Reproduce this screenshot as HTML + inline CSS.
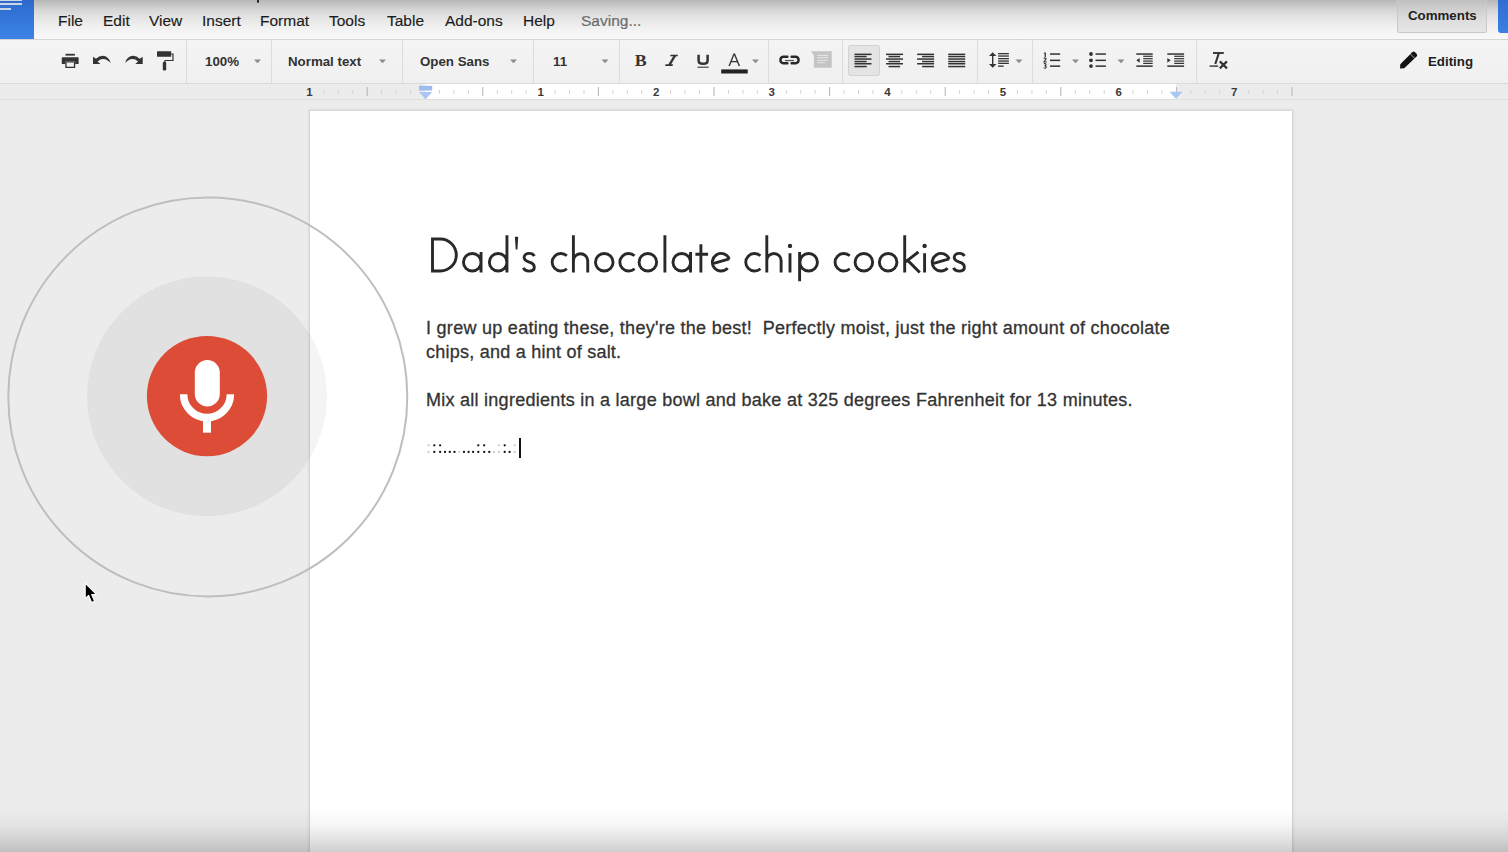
<!DOCTYPE html>
<html><head><meta charset="utf-8">
<style>
html,body{margin:0;padding:0;}
body{width:1508px;height:852px;overflow:hidden;position:relative;background:#ececec;font-family:"Liberation Sans",sans-serif;}
.abs{position:absolute;}
#hdr{left:0;top:0;width:1508px;height:39px;background:linear-gradient(#b6b6b6 0px,#c6c6c6 5px,#d6d6d6 10px,#e8e8e8 20px,#f3f3f3 30px,#f8f8f8 37px);}
#hdrline{left:0;top:39px;width:1508px;height:1px;background:#d5d5d5;}
#tb{left:0;top:40px;width:1508px;height:43px;background:linear-gradient(#f4f4f4,#f0f0f0);}
#tbline{left:0;top:83px;width:1508px;height:1px;background:#d9d9d9;}
#ruler{left:0;top:84px;width:1508px;height:15px;background:#ececec;}
#rulerline{left:0;top:99px;width:1508px;height:1px;background:#dedede;}
#rwhite{left:425px;top:84px;width:751px;height:15px;background:#fff;}
.menu{top:12px;font-size:15.5px;color:#1c1c1c;line-height:18px;white-space:nowrap;-webkit-text-stroke:0.15px #1c1c1c;}
.tbt{font-size:13.3px;font-weight:bold;color:#333;line-height:15px;white-space:nowrap;top:53.5px;}
.sep{top:40px;width:1px;height:43px;background:#dcdcdc;}
.dd{width:0;height:0;border-left:3.5px solid transparent;border-right:3.5px solid transparent;border-top:4px solid #888;top:59px;}
#page{left:310px;top:111px;width:982px;height:760px;background:#fff;box-shadow:0 0 0 1px #d6d6d6,0 0 2px 2px rgba(0,0,0,0.06);}
.doc{font-size:18px;color:#333;white-space:nowrap;line-height:20px;-webkit-text-stroke:0.3px #333;}
#vig{left:0;top:808px;width:1508px;height:44px;background:linear-gradient(rgba(0,0,0,0) 0px,rgba(0,0,0,0.04) 18px,rgba(0,0,0,0.11) 31px,rgba(0,0,0,0.19) 44px);}
</style></head>
<body>
<div id="hdr" class="abs"></div>
<div id="hdrline" class="abs"></div>
<div class="abs" style="left:256.6px;top:-1px;width:2.6px;height:3.6px;border-radius:0 0 1.3px 1.3px;background:#2b2834;"></div>
<!-- docs icon -->
<div class="abs" style="left:0;top:0;width:34px;height:39px;background:linear-gradient(#2d69cc,#3c84e6);"></div>
<div class="abs" style="left:0;top:0;width:22px;height:1px;background:#cbd6e4;"></div>
<div class="abs" style="left:0;top:3px;width:22px;height:2px;background:#cbd6e4;"></div>
<div class="abs" style="left:0;top:8px;width:11px;height:2px;background:#cbd6e4;"></div>

<div class="abs menu" style="left:58px;">File</div>
<div class="abs menu" style="left:103px;">Edit</div>
<div class="abs menu" style="left:149px;">View</div>
<div class="abs menu" style="left:202px;">Insert</div>
<div class="abs menu" style="left:260px;">Format</div>
<div class="abs menu" style="left:329px;">Tools</div>
<div class="abs menu" style="left:387px;">Table</div>
<div class="abs menu" style="left:445px;">Add-ons</div>
<div class="abs menu" style="left:523px;">Help</div>
<div class="abs menu" style="left:581px;color:#777;">Saving...</div>

<!-- comments button -->
<div class="abs" style="left:1397px;top:-3px;width:88px;height:34px;border:1px solid #c9c9c9;border-radius:2px;background:linear-gradient(#bdbdbd,#dcdcdc 20px,#e6e6e6);"></div>
<div class="abs tbt" style="left:1408px;top:8px;color:#222;">Comments</div>
<div class="abs" style="left:1498px;top:-4px;width:14px;height:37px;border-radius:3px;background:linear-gradient(#2f6bd0,#3b80e4);"></div>

<div id="tb" class="abs"></div>
<div id="tbline" class="abs"></div>
<div id="ruler" class="abs"></div>
<div id="rwhite" class="abs"></div>
<div id="rulerline" class="abs"></div>
<!-- ruler -->
<svg class="abs" style="left:0;top:84px;" width="1508" height="16" viewBox="0 84 1508 16">
<g fill="#cfcfcf"><rect x="323.4" y="90" width="1" height="3.5"/><rect x="337.8" y="90" width="1" height="3.5"/><rect x="352.2" y="90" width="1" height="3.5"/><rect x="381.1" y="90" width="1" height="3.5"/><rect x="395.6" y="90" width="1" height="3.5"/><rect x="410.1" y="90" width="1" height="3.5"/><rect x="438.9" y="90" width="1" height="3.5"/><rect x="453.4" y="90" width="1" height="3.5"/><rect x="467.9" y="90" width="1" height="3.5"/><rect x="496.8" y="90" width="1" height="3.5"/><rect x="511.2" y="90" width="1" height="3.5"/><rect x="525.6" y="90" width="1" height="3.5"/><rect x="554.5" y="90" width="1" height="3.5"/><rect x="569.0" y="90" width="1" height="3.5"/><rect x="583.5" y="90" width="1" height="3.5"/><rect x="612.4" y="90" width="1" height="3.5"/><rect x="626.8" y="90" width="1" height="3.5"/><rect x="641.2" y="90" width="1" height="3.5"/><rect x="670.1" y="90" width="1" height="3.5"/><rect x="684.6" y="90" width="1" height="3.5"/><rect x="699.0" y="90" width="1" height="3.5"/><rect x="728.0" y="90" width="1" height="3.5"/><rect x="742.4" y="90" width="1" height="3.5"/><rect x="756.8" y="90" width="1" height="3.5"/><rect x="785.8" y="90" width="1" height="3.5"/><rect x="800.2" y="90" width="1" height="3.5"/><rect x="814.6" y="90" width="1" height="3.5"/><rect x="843.5" y="90" width="1" height="3.5"/><rect x="858.0" y="90" width="1" height="3.5"/><rect x="872.5" y="90" width="1" height="3.5"/><rect x="901.3" y="90" width="1" height="3.5"/><rect x="915.8" y="90" width="1" height="3.5"/><rect x="930.2" y="90" width="1" height="3.5"/><rect x="959.1" y="90" width="1" height="3.5"/><rect x="973.6" y="90" width="1" height="3.5"/><rect x="988.0" y="90" width="1" height="3.5"/><rect x="1016.9" y="90" width="1" height="3.5"/><rect x="1031.4" y="90" width="1" height="3.5"/><rect x="1045.8" y="90" width="1" height="3.5"/><rect x="1074.8" y="90" width="1" height="3.5"/><rect x="1089.2" y="90" width="1" height="3.5"/><rect x="1103.7" y="90" width="1" height="3.5"/><rect x="1132.5" y="90" width="1" height="3.5"/><rect x="1147.0" y="90" width="1" height="3.5"/><rect x="1161.4" y="90" width="1" height="3.5"/><rect x="1190.3" y="90" width="1" height="3.5"/><rect x="1204.8" y="90" width="1" height="3.5"/><rect x="1219.2" y="90" width="1" height="3.5"/><rect x="1248.2" y="90" width="1" height="3.5"/><rect x="1262.6" y="90" width="1" height="3.5"/><rect x="1277.0" y="90" width="1" height="3.5"/></g>
<g fill="#b4b4b4"><rect x="366.7" y="87" width="1" height="9"/><rect x="482.3" y="87" width="1" height="9"/><rect x="597.9" y="87" width="1" height="9"/><rect x="713.5" y="87" width="1" height="9"/><rect x="829.1" y="87" width="1" height="9"/><rect x="944.7" y="87" width="1" height="9"/><rect x="1060.3" y="87" width="1" height="9"/><rect x="1175.9" y="87" width="1" height="9"/><rect x="1291.5" y="87" width="1" height="9"/></g>
<g fill="#3a3a3a" font-family="Liberation Sans" font-weight="bold" font-size="11.5"><text x="309.4" y="95.8" text-anchor="middle">1</text><text x="540.6" y="95.8" text-anchor="middle">1</text><text x="656.2" y="95.8" text-anchor="middle">2</text><text x="771.8" y="95.8" text-anchor="middle">3</text><text x="887.4" y="95.8" text-anchor="middle">4</text><text x="1003.0" y="95.8" text-anchor="middle">5</text><text x="1118.6" y="95.8" text-anchor="middle">6</text><text x="1234.2" y="95.8" text-anchor="middle">7</text></g>
<path d="M419 85.8 H432.2 V90.6 H419 Z" fill="#9dbcf0"/><path d="M419 92 H432.2 L425.6 99.3 Z" fill="#a9c5f4"/>
<path d="M1169.5 91.8 H1182.6 L1176 98.8 Z" fill="#a9c5f4"/>
</svg>

<!-- toolbar icons -->
<svg class="abs" style="left:0;top:40px;" width="1508" height="44" viewBox="0 40 1508 44">
<g fill="#dcdcdc">
<rect x="186" y="40" width="1" height="43"/><rect x="271" y="40" width="1" height="43"/><rect x="402" y="40" width="1" height="43"/><rect x="533" y="40" width="1" height="43"/><rect x="619" y="40" width="1" height="43"/><rect x="768" y="40" width="1" height="43"/><rect x="842" y="40" width="1" height="43"/><rect x="977" y="40" width="1" height="43"/><rect x="1032" y="40" width="1" height="43"/><rect x="1196" y="40" width="1" height="43"/>
</g>
<!-- print -->
<g fill="#333">
<rect x="65.5" y="53.8" width="9.4" height="1.8"/>
<path d="M62.3 57.3 H78.2 Q78.6 57.3 78.6 57.8 V64.1 H75.2 V61.6 H65.3 V64.1 H61.8 V57.8 Q61.8 57.3 62.3 57.3 Z"/>
<path d="M65.3 61.6 H75.2 V68 H65.3 Z M66.6 62.6 V66.8 H73.9 V62.6 Z" fill-rule="evenodd"/>
</g>
<!-- undo / redo -->
<g fill="#333">
<path d="M93 56.7 V64.1 H100.4 L97.6 61.4 Q102.6 57.2 107.6 60.5 Q109.6 61.8 110.7 63 Q108.6 56 102.6 55.8 Q99 55.8 96 58.8 Z"/>
<path d="M142.7 56.7 V64.1 H135.3 L138.1 61.4 Q133.1 57.2 128.1 60.5 Q126.1 61.8 125 63 Q127.1 56 133.1 55.8 Q136.7 55.8 139.7 58.8 Z"/>
</g>
<!-- paint roller -->
<g fill="#333">
<rect x="157" y="51.2" width="14.2" height="5.6" rx="0.6"/>
<path d="M171.2 53.6 H173.6 V60.9 H165.4 V62 H164.4 V59.9 H172.4 V54.6 H171.2 Z"/>
<rect x="162.8" y="61.8" width="3.4" height="8.6" rx="1.2"/>
</g>
<!-- dropdown arrows -->
<g fill="#8c8c8c">
<path d="M254 59.6 H261 L257.5 63.2 Z"/><path d="M379 59.6 H386 L382.5 63.2 Z"/><path d="M510 59.6 H517 L513.5 63.2 Z"/><path d="M601.5 59.6 H608.5 L605 63.2 Z"/><path d="M752 59.6 H759 L755.5 63.2 Z"/><path d="M1015.5 59.6 H1022.5 L1019 63.2 Z"/><path d="M1072 59.6 H1079 L1075.5 63.2 Z"/><path d="M1117.5 59.6 H1124.5 L1121 63.2 Z"/>
</g>
<!-- B I U A -->
<text x="634.8" y="65.9" font-family="Liberation Serif" font-weight="bold" font-size="17" fill="#333" transform="translate(634.8 65.9) scale(1.05 1) translate(-634.8 -65.9)">B</text>
<path d="M670.6 54.7 H678 L677.5 56.3 H670.1 Z M665.6 64.3 H673 L672.5 65.9 H665.1 Z" fill="#333"/><path d="M675.1 55.4 L669.3 65.2" stroke="#333" stroke-width="2.3"/>
<path d="M698.6 54.7 V60.4 Q698.6 63.8 703.1 63.8 Q707.6 63.8 707.6 60.4 V54.7" fill="none" stroke="#333" stroke-width="2.5"/>
<rect x="697.5" y="66.6" width="11.2" height="1.3" fill="#555"/>
<path d="M728.4 65.9 L733.5 53.4 H735 L740.1 65.9 H738.6 L737.1 62.2 H731.4 L729.9 65.9 Z M731.9 60.9 H736.6 L734.25 55.2 Z" fill="#333" fill-rule="evenodd"/>
<rect x="721.2" y="69.4" width="26.5" height="4.1" fill="#222"/>
<!-- link -->
<g fill="none" stroke="#2a2a2a" stroke-width="2.4" stroke-linecap="round">
<path d="M787.4 56.8 H783.1 A3.25 3.25 0 0 0 783.1 63.2 H787.4"/>
<path d="M791.6 56.8 H795.9 A3.25 3.25 0 0 1 795.9 63.2 H791.6"/>
</g>
<rect x="785" y="59.9" width="9" height="1.3" fill="#555"/>
<!-- comment (disabled) -->
<path d="M811 51.2 H831.7 V67.7 H813.9 V55.4 Z" fill="#c4c4c4"/>
<g fill="#e4e4e4"><rect x="817.3" y="54.9" width="10.8" height="1.1"/><rect x="817.3" y="57" width="10.8" height="1.1"/><rect x="817.3" y="59.8" width="10.8" height="1.1"/><rect x="817.3" y="62.1" width="7.7" height="1.1"/></g>
<!-- align left pressed button -->
<rect x="848.5" y="45.5" width="31" height="30" rx="2" fill="#e4e4e4" stroke="#d2d2d2"/>
<g fill="#333">
<rect x="854.5" y="53.6" width="17" height="1.5"/><rect x="854.5" y="55.8" width="12.2" height="1.5"/><rect x="854.5" y="58.3" width="17" height="1.5"/><rect x="854.5" y="60.8" width="12.2" height="1.5"/><rect x="854.5" y="63" width="17" height="1.5"/><rect x="854.5" y="65.8" width="12.2" height="1.5"/>
<rect x="886" y="53.6" width="17" height="1.5"/><rect x="888.5" y="55.8" width="11.6" height="1.5"/><rect x="886" y="58.3" width="17" height="1.5"/><rect x="888.5" y="60.8" width="11.6" height="1.5"/><rect x="886" y="63" width="17" height="1.5"/><rect x="888.5" y="65.8" width="11.6" height="1.5"/>
<rect x="917.1" y="53.6" width="17" height="1.5"/><rect x="922.1" y="55.8" width="12" height="1.5"/><rect x="917.1" y="58.3" width="17" height="1.5"/><rect x="922.1" y="60.8" width="12" height="1.5"/><rect x="917.1" y="63" width="17" height="1.5"/><rect x="922.1" y="65.8" width="12" height="1.5"/>
<rect x="948.2" y="53.6" width="17" height="1.5"/><rect x="948.2" y="55.8" width="17" height="1.5"/><rect x="948.2" y="58.3" width="17" height="1.5"/><rect x="948.2" y="60.8" width="17" height="1.5"/><rect x="948.2" y="63" width="17" height="1.5"/><rect x="948.2" y="65.8" width="17" height="1.5"/>
</g>
<!-- line spacing -->
<g fill="#333">
<rect x="992" y="54" width="1.4" height="12"/>
<path d="M989 56 L992.7 52.3 L996.4 56 Z M989 64.1 L992.7 67.8 L996.4 64.1 Z"/>
<rect x="998.1" y="53" width="10.8" height="1.3"/><rect x="998.1" y="55.4" width="10.8" height="1.3"/><rect x="998.1" y="58" width="10.8" height="1.3"/><rect x="998.1" y="60.4" width="10.8" height="1.3"/><rect x="998.1" y="62.7" width="10.8" height="1.3"/><rect x="998.1" y="65.5" width="5.6" height="1.3"/>
</g>
<!-- numbered list -->
<g fill="#333">
<path d="M1044.2 52.4 H1045.9 V57.2 H1044.6 V53.6 H1043.5 Z"/>
<path d="M1043.4 58.6 Q1043.6 57.6 1045 57.6 Q1046.8 57.7 1046.6 59.1 Q1046.4 60 1044.9 61.4 H1046.8 V62.4 H1043.4 V61.5 Q1045.3 59.8 1045.3 59.1 Q1045.2 58.5 1044.8 58.6 Q1044.5 58.7 1044.5 59 Z"/>
<path d="M1043.4 63.9 Q1043.8 63 1045 63 Q1046.7 63.1 1046.6 64.5 Q1046.6 65.3 1045.9 65.7 Q1046.8 66.1 1046.8 67 Q1046.7 68.6 1045 68.7 Q1043.6 68.7 1043.3 67.6 L1044.3 67.3 Q1044.5 67.8 1045 67.8 Q1045.6 67.7 1045.6 67 Q1045.5 66.2 1044.5 66.2 V65.3 Q1045.4 65.3 1045.4 64.6 Q1045.4 64 1044.9 64 Q1044.5 64 1044.4 64.3 Z"/>
<rect x="1050" y="53.3" width="10.2" height="1.5"/><rect x="1050" y="59.6" width="10.2" height="1.5"/><rect x="1050" y="65.4" width="10.2" height="1.5"/>
</g>
<!-- bullet list -->
<g fill="#333">
<circle cx="1091" cy="54" r="1.9"/><circle cx="1091" cy="60.3" r="1.9"/><circle cx="1091" cy="66.1" r="1.9"/>
<rect x="1095.5" y="53.3" width="10.4" height="1.5"/><rect x="1095.5" y="59.6" width="10.4" height="1.5"/><rect x="1095.5" y="65.4" width="10.4" height="1.5"/>
</g>
<!-- indents -->
<g fill="#333">
<rect x="1136.3" y="53.3" width="16.4" height="1.5"/><rect x="1143.2" y="55.7" width="9.5" height="1.2"/><rect x="1143.2" y="58.1" width="9.5" height="1.2"/><rect x="1143.2" y="60.5" width="9.5" height="1.2"/><rect x="1143.2" y="62.8" width="9.5" height="1.2"/><rect x="1136.3" y="65.4" width="16.4" height="1.5"/>
<path d="M1139.7 57.9 V62.7 L1136.3 60.3 Z"/>
<rect x="1167.3" y="53.3" width="16.8" height="1.5"/><rect x="1174.2" y="55.7" width="9.9" height="1.2"/><rect x="1174.2" y="58.1" width="9.9" height="1.2"/><rect x="1174.2" y="60.5" width="9.9" height="1.2"/><rect x="1174.2" y="62.8" width="9.9" height="1.2"/><rect x="1167.3" y="65.4" width="16.8" height="1.5"/>
<path d="M1167.3 57.9 V62.7 L1170.7 60.3 Z"/>
</g>
<!-- clear formatting -->
<g fill="none" stroke="#333">
<path d="M1213 53 H1223.8" stroke-width="1.9"/>
<path d="M1218.8 53.2 L1215.3 64" stroke-width="2.1"/>
<path d="M1209.6 66.1 H1218.2" stroke-width="1.4"/>
<path d="M1219.8 61.4 L1227 68.4 M1227 61.4 L1219.8 68.4" stroke-width="2.2"/>
</g>
<!-- pencil -->
<path d="M1412.2 52.2 Q1413.6 50.9 1415 52.2 L1416.6 53.8 Q1417.9 55.2 1416.6 56.6 L1404.2 68.3 L1400 68.5 L1400.3 64.3 Z" fill="#111"/>
<path d="M1410.4 54 L1414.8 58.4" stroke="#f2f2f2" stroke-width="0.7"/>
</svg>
<div class="abs tbt" style="left:205px;">100%</div>
<div class="abs tbt" style="left:288px;">Normal text</div>
<div class="abs tbt" style="left:420px;">Open Sans</div>
<div class="abs tbt" style="left:553px;">11</div>
<div class="abs tbt" style="left:1428px;color:#222;">Editing</div>

<div id="page" class="abs"></div>
<!-- document content -->
<svg class="abs" id="title" style="left:420px;top:225px;" width="560" height="64" viewBox="420 225 560 64">
<path d="M432.50 238.95H440.3A16.05 16.05 0 0 1 440.3 271.05H432.5ZM463.45 262.25a8.80 8.80 0 1 0 17.60 0a8.80 8.80 0 1 0 -17.60 0M481.05 252.00L481.05 272.50M489.35 262.25a8.80 8.80 0 1 0 17.60 0a8.80 8.80 0 1 0 -17.60 0M506.95 235.20L506.95 272.50M 534.40 256.00 C 533.40 254.20 531.40 253.40 529.20 253.40 C 526.20 253.40 524.10 255.10 524.10 257.60 C 524.10 260.40 526.80 261.30 529.40 262.20 C 532.20 263.10 534.30 264.40 534.30 267.20 C 534.30 269.70 532.10 271.10 529.00 271.10 C 526.30 271.10 524.20 269.80 523.40 267.90M566.84 255.71A8.80 8.80 0 1 0 566.84 268.79M573.40 235.20L573.40 272.50M573.40 261.62V260.62A7.18 7.18 0 0 1 587.75 260.62V272.50M595.45 262.25a8.80 8.80 0 1 0 17.60 0a8.80 8.80 0 1 0 -17.60 0M634.54 255.71A8.80 8.80 0 1 0 634.54 268.79M639.05 262.25a8.80 8.80 0 1 0 17.60 0a8.80 8.80 0 1 0 -17.60 0M664.90 235.20L664.90 272.50M672.95 262.25a8.80 8.80 0 1 0 17.60 0a8.80 8.80 0 1 0 -17.60 0M690.55 252.00L690.55 272.50M700.90 244.30L700.90 272.50M695.40 254.25H708.10M729.31 258.95A8.80 8.80 0 1 0 727.69 268.14M712.85 263.55L729.31 258.95M760.44 255.71A8.80 8.80 0 1 0 760.44 268.79M766.80 235.20L766.80 272.50M766.80 261.60V260.60A7.15 7.15 0 0 1 781.10 260.60V272.50M790.00 253.20L790.00 272.50M799.85 262.25a8.80 8.80 0 1 0 17.60 0a8.80 8.80 0 1 0 -17.60 0M799.60 252.00L799.60 281.30M849.74 255.71A8.80 8.80 0 1 0 849.74 268.79M855.05 262.25a8.80 8.80 0 1 0 17.60 0a8.80 8.80 0 1 0 -17.60 0M879.35 262.25a8.80 8.80 0 1 0 17.60 0a8.80 8.80 0 1 0 -17.60 0M904.70 235.20L904.70 272.50M905.20 262.20L918.40 252.00M906.90 259.60L919.80 272.50M924.60 253.20L924.60 272.50M949.21 258.95A8.80 8.80 0 1 0 947.59 268.14M932.75 263.55L949.21 258.95M 964.50 256.00 C 963.50 254.20 961.50 253.40 959.30 253.40 C 956.30 253.40 954.20 255.10 954.20 257.60 C 954.20 260.40 956.90 261.30 959.50 262.20 C 962.30 263.10 964.40 264.40 964.40 267.20 C 964.40 269.70 962.20 271.10 959.10 271.10 C 956.40 271.10 954.30 269.80 953.50 267.90" fill="none" stroke="#292929" stroke-width="2.9" stroke-linecap="butt"/>
<path d="M514.9 236.8H518.2L517.4 249.5H515.7Z" fill="#292929"/>
<circle cx="790.0" cy="245.9" r="2.2" fill="#292929"/>
<circle cx="924.6" cy="245.9" r="2.2" fill="#292929"/>
</svg>
<div class="abs doc" id="l1" style="left:426px;top:318px;letter-spacing:0.28px;">I grew up eating these, they're the best!&nbsp; Perfectly moist, just the right amount of chocolate</div>
<div class="abs doc" id="l2" style="left:426px;top:342px;letter-spacing:0.24px;">chips, and a hint of salt.</div>
<div class="abs doc" id="l3" style="left:426px;top:390px;letter-spacing:0.26px;">Mix all ingredients in a large bowl and bake at 325 degrees Fahrenheit for 13 minutes.</div>
<svg class="abs" style="left:420px;top:436px;" width="110" height="26" viewBox="420 436 110 26">
<g fill="#111">
<circle cx="434.3" cy="445.3" r="1.15"/><circle cx="440.1" cy="445.3" r="1.15"/><circle cx="478.3" cy="445.3" r="1.15"/><circle cx="484.2" cy="445.3" r="1.15"/><circle cx="504.7" cy="445.3" r="1.15"/>
<circle cx="434.3" cy="451.9" r="1.15"/><circle cx="440.1" cy="451.9" r="1.15"/><circle cx="445" cy="451.9" r="1.15"/><circle cx="449.8" cy="451.9" r="1.15"/><circle cx="454.5" cy="451.9" r="1.15"/><circle cx="464" cy="451.9" r="1.15"/><circle cx="468.6" cy="451.9" r="1.15"/><circle cx="473.1" cy="451.9" r="1.15"/><circle cx="478.3" cy="451.9" r="1.15"/><circle cx="484.2" cy="451.9" r="1.15"/><circle cx="489.3" cy="451.9" r="1.15"/><circle cx="504.7" cy="451.9" r="1.15"/><circle cx="509.6" cy="451.9" r="1.15"/>
</g>
<g fill="#ccc">
<circle cx="428.6" cy="445.3" r="1.15"/><circle cx="498.8" cy="445.3" r="1.15"/><circle cx="514.7" cy="445.3" r="1.15"/>
<circle cx="428.6" cy="451.9" r="1.15"/><circle cx="459.4" cy="451.9" r="1.15"/><circle cx="494" cy="451.9" r="1.15"/><circle cx="498.8" cy="451.9" r="1.15"/><circle cx="514.7" cy="451.9" r="1.15"/>
</g>
<rect x="519" y="438" width="2" height="20" fill="#111"/>
</svg>

<!-- voice typing widget -->
<svg class="abs" style="left:0;top:180px;" width="440" height="440" viewBox="0 180 440 440">
<circle cx="207" cy="396.3" r="119.6" fill="rgba(0,0,0,0.042)" stroke="rgba(0,0,0,0.025)" stroke-width="1"/>
<circle cx="207.8" cy="396.9" r="199.5" fill="none" stroke="#bebebe" stroke-width="2"/>
<circle cx="207" cy="396.1" r="60.1" fill="#dc4c36"/>
<rect x="194.8" y="360" width="25" height="46.4" rx="12.5" fill="#fff"/>
<path d="M183.6 394.2 A23.4 23.4 0 0 0 230.4 394.2" fill="none" stroke="#fff" stroke-width="7.5"/>
<rect x="203" y="416" width="8" height="16.7" fill="#fff"/>
</svg>

<!-- mouse cursor -->
<svg class="abs" style="left:80px;top:578px;" width="24" height="30" viewBox="80 578 24 30">
<path d="M85.2 583.2 L85.2 598.6 L88.6 595.3 L91.6 602.6 L94.6 601.3 L91.7 594.6 L96.4 594.4 Z" fill="#000" stroke="#fff" stroke-width="1.1" stroke-linejoin="round"/>
</svg>

<div id="vig" class="abs"></div>
</body></html>
